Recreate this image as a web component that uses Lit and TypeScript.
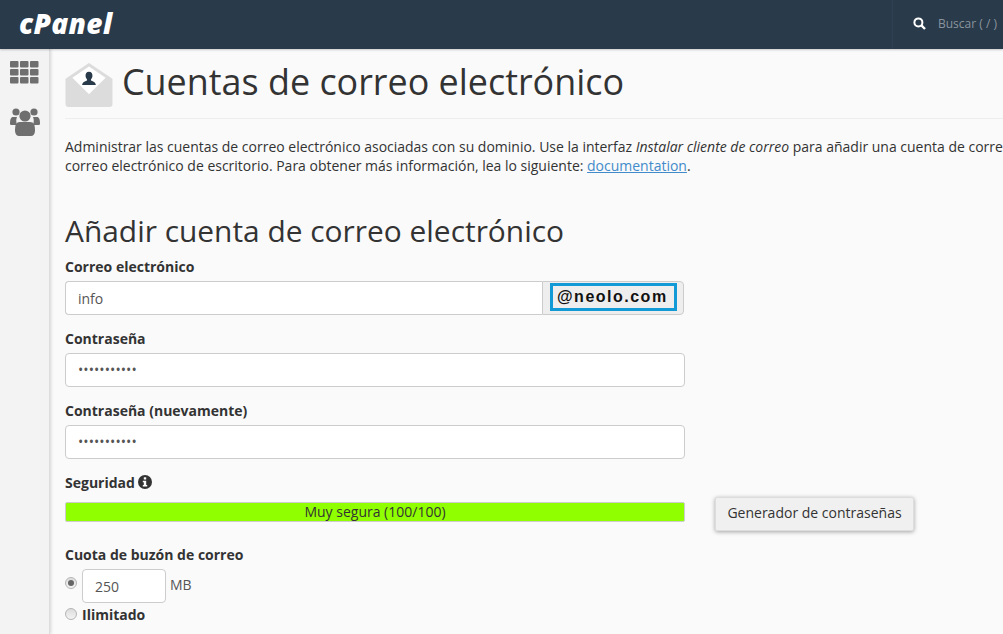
import { LitElement, html, svg, css } from "lit";
import { customElement } from "lit/decorators.js";

@customElement("app-root")
export class AppRoot extends LitElement {
  static styles = css`
    :host { display: block; width: 1003px; height: 634px; overflow: hidden; background: #fafafa; font-family: "Open Sans", sans-serif; font-size: 14px; color: #333; }
    * { box-sizing: border-box; }
    .top { height: 49px; background: #293a4a; display: flex; align-items: center; position: relative; z-index: 2; box-shadow: 0 1px 2px rgba(0,0,0,.2); }
    .logo { margin-left: 19px; width: 873px; color: #fff; font: italic 800 28px/47px "Open Sans", sans-serif; letter-spacing: .35px; height: 49px; }
    .search { height: 49px; flex: 1; border-left: 1px solid #2f4054; display: flex; align-items: center; padding: 0 0 2px 20px; gap: 12px; color: #8a949e; font-size: 12px; white-space: nowrap; }
    .body { display: flex; height: 585px; }
    .side { width: 50px; flex: none; background: #f3f3f3; border-right: 1px solid #ddd; box-shadow: 1px 0 3px rgba(0,0,0,.15); padding: 12px 0 0 10px; display: flex; flex-direction: column; gap: 23px; }
    .main { width: 953px; padding: 0 0 0 15px; overflow: hidden; }
    .head { display: flex; align-items: center; gap: 9px; height: 70px; width: 938px; border-bottom: 1px solid #eee; padding-bottom: 4px; }
    .head svg { align-self: flex-start; margin-top: 14px; }
    h1 { margin: 0; font-weight: 400; font-size: 35.9px; line-height: 50px; color: #333; white-space: nowrap; }
    .intro { margin: 19.2px 0 0; line-height: 18.6px; white-space: nowrap; font-size: 13.99px; }
    .intro em { line-height: 1; }
    .intro a { color: #428bca; text-decoration: underline; }
    h2 { margin: 34.6px 0 5px; font-weight: 400; font-size: 29.9px; line-height: 42px; white-space: nowrap; }
    label { display: block; font-weight: 700; line-height: 19px; }
    .field { width: 620px; height: 34px; margin: 5px 0 14px; background: #fff; border: 1px solid #ccc; border-radius: 4px; padding: 0 12px; display: flex; align-items: center; color: #555; font-size: 14px; }
    .pw { letter-spacing: 0.08px; font-size: 14px; }
    .group { display: flex; width: 619px; height: 34px; margin: 5px 0 14px; }
    .group .input { flex: 1; background: #fff; border: 1px solid #ccc; border-right: 0; border-radius: 4px 0 0 4px; padding: 1px 12px 0; display: flex; align-items: center; color: #555; }
    .addon { width: 142px; background: #eee; border: 1px solid #ccc; border-radius: 0 4px 4px 0; padding: 1px 6px 1px 7px; }
    .domain { height: 28px; border: 3px solid #129ad6; font: 700 16px/21px "Liberation Sans", sans-serif; letter-spacing: 1.5px; color: #111; padding-left: 4px; white-space: nowrap; }
    .sec { display: flex; align-items: center; gap: 3px; }
    .strength { display: flex; align-items: flex-start; }
    .bar { width: 620px; height: 20px; margin-top: 10px; background: #90ff00; border: 1px solid #ccc; border-radius: 2px; text-align: center; font-size: 14px; line-height: 18px; color: #333; }
    button { margin: 5px 0 0 30px; width: 199px; height: 34px; padding: 0 0 2px; background: #f0f0f0; border: 1px solid #ddd; border-radius: 2px; box-shadow: 0 1px 4px rgba(0,0,0,.35); font: 14px "Open Sans", sans-serif; color: #333; }
    .quota { margin-top: 14px; }
    .opt { display: flex; align-items: flex-start; gap: 5px; margin-top: 5px; }
    .radio { width: 12px; height: 12px; border-radius: 50%; border: 1px solid #b5b5b5; background: linear-gradient(#dcdcdc, #f4f4f4); margin-top: 8px; display: flex; align-items: center; justify-content: center; flex: none; }
    .radio i { width: 6px; height: 6px; border-radius: 50%; background: #666; }
    .num { width: 84px; height: 34px; background: #fff; border: 1px solid #ccc; border-radius: 4px; padding: 2px 12px 0; display: flex; align-items: center; color: #555; }
    .opt .unit { margin: 6px 0 0 -1px; color: #555; }
    .unlimited { display: flex; gap: 5px; font-weight: 700; line-height: 19px; margin-top: 2px; }
    .unlimited .radio { margin-top: 3px; }
    svg { display: block; flex: none; }
  `;

  render() {
    return html`
      <div class="top">
        <div class="logo">cPanel</div>
        <div class="search">
          <svg width="13" height="13" viewBox="0 0 13 13"><circle cx="5.4" cy="5.4" r="4" fill="none" stroke="#fff" stroke-width="2"/><path d="M8.4 8.4L12 12" stroke="#fff" stroke-width="2.4"/></svg>
          <span>Buscar ( / )</span>
        </div>
      </div>
      <div class="body">
        <div class="side">
          <svg width="29" height="23" viewBox="0 0 29 23" fill="#6f6f6f">
            ${[0, 8, 16].map(y => [0, 10, 20].map(x => svg`<rect x=${x} y=${y} width="8.5" height="6.5" rx="1"/>`))}
          </svg>
          <svg width="30" height="29" viewBox="0 0 30 29" fill="#6f6f6f">
            <circle cx="6" cy="5" r="3.6"/><circle cx="24" cy="5" r="3.6"/>
            <path d="M0 17c0-5 1-7 3-7h4c-1 2-1 5 0 8H2c-1 0-2-.2-2-1zM30 17c0-5-1-7-3-7h-4c1 2 1 5 0 8h5c1 0 2-.2 2-1z"/>
            <circle cx="15" cy="9" r="5.6" />
            <path d="M5 24c0-6 1-9 5-9h10c4 0 5 3 5 9 0 3-2 5-4 5H9c-2 0-4-2-4-5z"/>
          </svg>
        </div>
        <div class="main">
          <div class="head">
            <svg width="48" height="44" viewBox="0 0 48 45">
              <path d="M0 16L24 0l24 16v26a3 3 0 0 1-3 3H3a3 3 0 0 1-3-3z" fill="#dcdcdc"/>
              <path d="M24 3.500L7 15l17 17 17-17z" fill="#fff"/>
              <path d="M24 9c-2.500 0-3.800 2-3.500 4.500.2 1.500.8 2.500 1.500 3.300v1.200c-1.500 1-4.500 1-5 4.500h14c-.5-3.500-3.500-3.500-5-4.500v-1.200c.7-.8 1.300-1.800 1.500-3.300C27.800 11 26.500 9 24 9z" fill="#293a4a"/>
            </svg>
            <h1>Cuentas de correo electrónico</h1>
          </div>
          <p class="intro">
            Administrar las cuentas de correo electrónico asociadas con su dominio. Use la interfaz <em>Instalar cliente de correo</em> para añadir una cuenta de correo a su cliente de<br>
            correo electrónico de escritorio. Para obtener más información, lea lo siguiente: <a>documentation</a>.
          </p>
          <h2>Añadir cuenta de correo electrónico</h2>
          <label>Correo electrónico</label>
          <div class="group">
            <div class="input">info</div>
            <div class="addon"><div class="domain">@neolo.com</div></div>
          </div>
          <label>Contraseña</label>
          <div class="field pw">•••••••••••</div>
          <label>Contraseña (nuevamente)</label>
          <div class="field pw">•••••••••••</div>
          <label class="sec">Seguridad
            <svg width="14" height="14" viewBox="0 0 14 14"><circle cx="7" cy="7" r="7" fill="#333"/><rect x="5.800" y="2.300" width="2.400" height="2.200" fill="#fff"/><path d="M4.800 5.700h3.400v4.400h1v1.500H4.800v-1.500h1V7.200h-1z" fill="#fff"/></svg>
          </label>
          <div class="strength">
            <div class="bar">Muy segura (100/100)</div>
            <button>Generador de contraseñas</button>
          </div>
          <label class="quota">Cuota de buzón de correo</label>
          <div class="opt">
            <span class="radio"><i></i></span>
            <div class="num">250</div>
            <span class="unit">MB</span>
          </div>
          <div class="unlimited"><span class="radio"></span><span>Ilimitado</span></div>
        </div>
      </div>
    `;
  }
}
